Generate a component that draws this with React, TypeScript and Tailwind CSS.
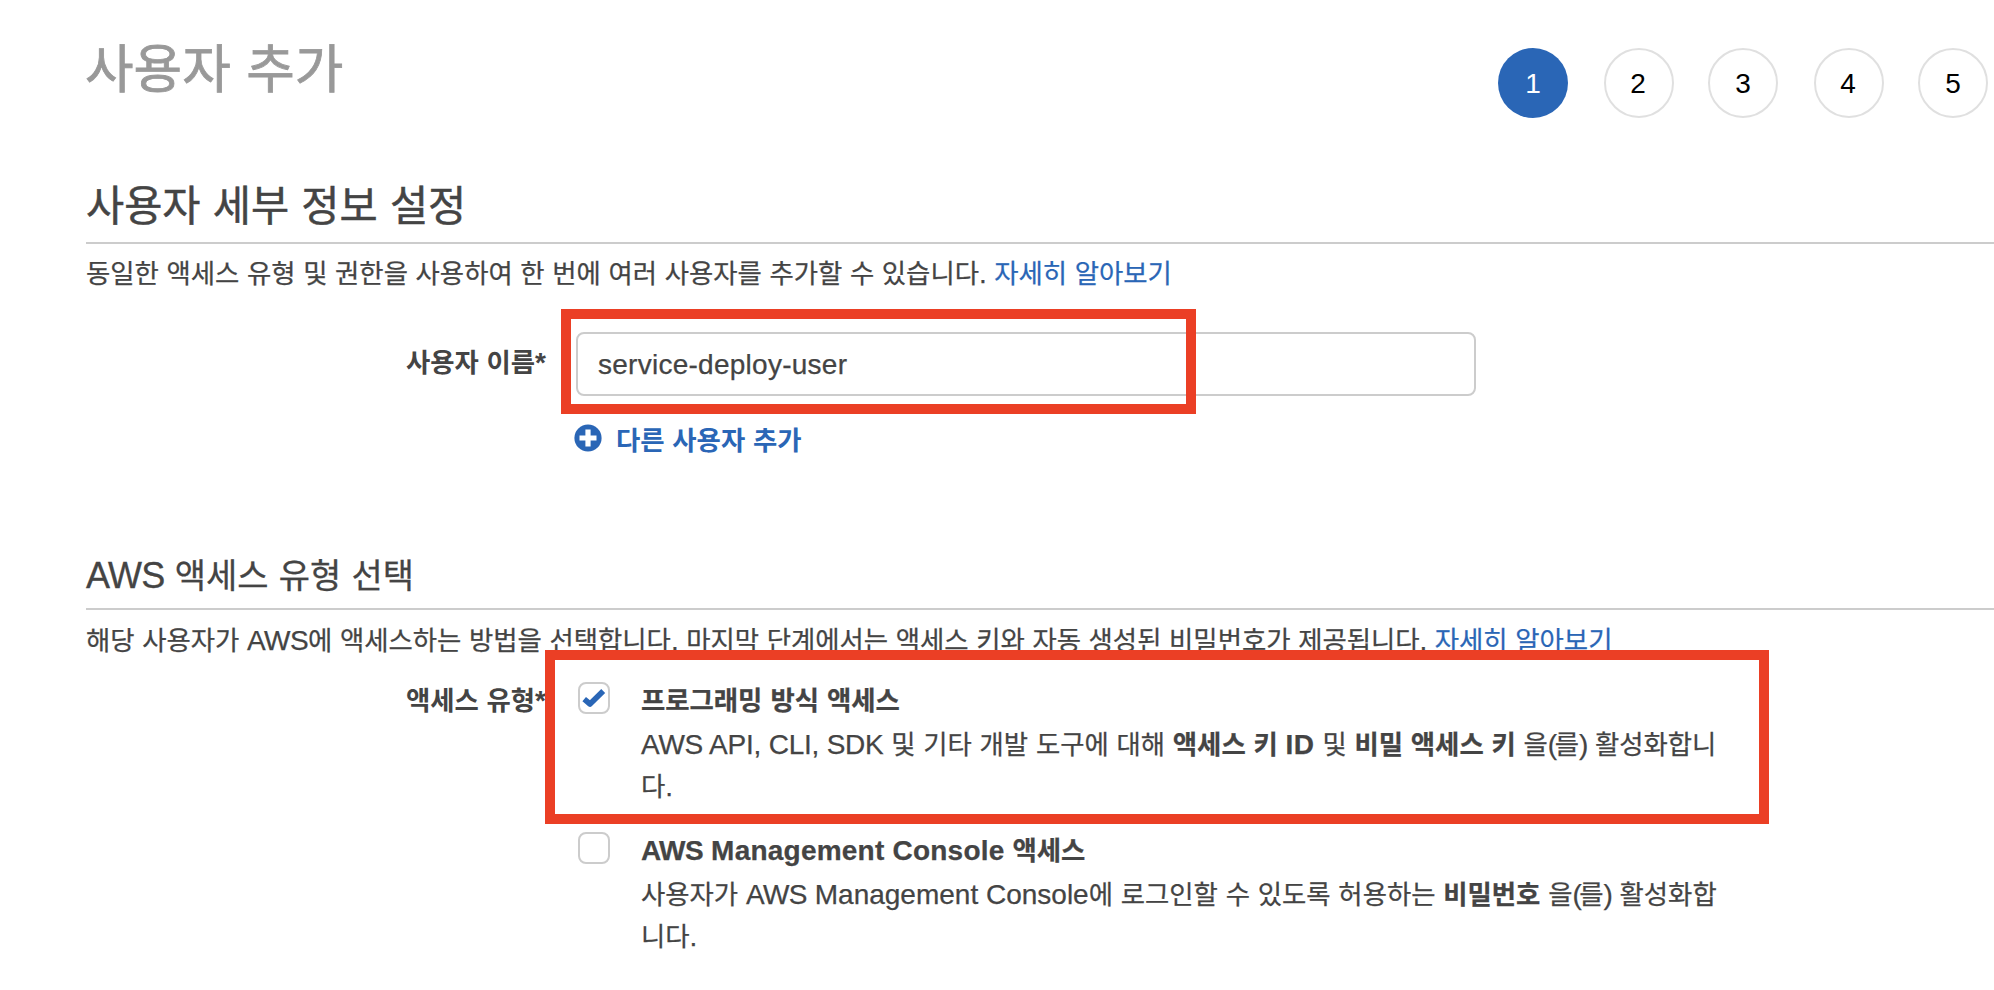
import { Fragment } from "react";
import type { ReactNode } from "react";

function Ko({ text }: { text: string }) {
  const runs = text.split(/([\uac00-\ud7a3]+|AWS|[()])/).filter(Boolean);
  return (
    <>
      {runs.map((run, i) => {
        if (/[\uac00-\ud7a3]/.test(run)) return <span key={i} className="text-[0.943em] tracking-normal">{run}</span>;
        if (run === "AWS") return <span key={i} className="tracking-[-0.02em]">{run}</span>;
        if (run === "(") return <span key={i} className="tracking-[-0.09em]">{run}</span>;
        if (run === ")") return <span key={i} className="tracking-[-0.04em]">{run}</span>;
        return <Fragment key={i}>{run}</Fragment>;
      })}
    </>
  );
}

function Step({ n, active }: { n: number; active?: boolean }) {
  return (
    <li
      className={
        active
          ? "flex size-[70px] items-center justify-center rounded-full bg-[#2a66b6] pt-0.5 text-white"
          : "flex size-[70px] items-center justify-center rounded-full border-2 border-[#e0e0e0] pt-0.5 text-black even:-mr-px even:ml-px even:pr-0.5"
      }
    >
      {n}
    </li>
  );
}

function Checkbox({ checked }: { checked?: boolean }) {
  return (
    <span className="mt-[3px] flex size-8 shrink-0 items-center justify-center rounded-lg border-2 border-[#cccccc] bg-white">
      {checked && (
        <svg viewBox="0 0 24 20" className="h-5 w-6 fill-none stroke-[#2a66b6]" strokeWidth="5.6">
          <path d="M2.2 11.2 L8 16 L21.2 3" strokeLinejoin="round" />
        </svg>
      )}
    </span>
  );
}

function Option({ title, checked, children }: { title: string; checked?: boolean; children: ReactNode }) {
  return (
    <div className="flex gap-[31px]">
      <Checkbox checked={checked} />
      <div>
        <div className="h-[45px] font-bold leading-[44px] tracking-[0.008em]"><Ko text={title} /></div>
        <div className="leading-[42px]">{children}</div>
      </div>
    </div>
  );
}

function Link({ text }: { text: string }) {
  return <a href="#" className="text-[#2a66b6]"><Ko text={text} /></a>;
}

export default function App() {
  return (
    <div className="relative h-[990px] w-[1994px] overflow-hidden bg-white pl-[86px] font-['Liberation_Sans','Noto_Sans_CJK_KR',sans-serif] text-[28px] text-[#444444]">
      <header className="flex h-[160px] justify-between pr-1.5">
        <h1 className="-ml-px pt-[27px] text-[56px] leading-[84px] text-[#999999] [-webkit-text-stroke:0.8px_#999999]"><Ko text="사용자 추가" /></h1>
        <ol className="flex gap-[35px] pt-12">
          <Step n={1} active />
          <Step n={2} />
          <Step n={3} />
          <Step n={4} />
          <Step n={5} />
        </ol>
      </header>

      <section className="h-[378px]">
        <h2 className="h-[84px] border-b-2 border-[#cccccc] pt-[13px] text-[44px] leading-[66px] [-webkit-text-stroke:0.5px_#444444]"><Ko text="사용자 세부 정보 설정" /></h2>
        <p className="h-[51px] pt-[9px] leading-[42px] tracking-[-0.14px] [-webkit-text-stroke:0.25px]">
          <Ko text="동일한 액세스 유형 및 권한을 사용하여 한 번에 여러 사용자를 추가할 수 있습니다. " />
          <Link text="자세히 알아보기" />
        </p>
        <div className="flex pt-[37px]">
          <div className="mr-[30px] w-[460px] pt-2.5 text-right font-bold leading-[42px]"><Ko text="사용자 이름*" /></div>
          <div>
            <input
              className="block h-16 w-[900px] rounded-lg border-2 border-[#cccccc] px-5 pt-0.5 text-[28px] tracking-[0.26px] outline-none [-webkit-text-stroke:0.25px]"
              defaultValue="service-deploy-user"
            />
            <a href="#" className="mt-[21px] -ml-0.5 flex h-[42px] items-center gap-3.5 font-bold leading-[42px] text-[#2a66b6]">
              <svg viewBox="0 0 28 28" className="size-7">
                <circle cx="14" cy="14" r="13.6" className="fill-[#2a66b6]" />
                <path d="M14 5.5v17M5.5 14h17" className="stroke-white" strokeWidth="5.2" />
              </svg>
              <span className="pt-[5px]"><Ko text="다른 사용자 추가" /></span>
            </a>
          </div>
        </div>
      </section>

      <section>
        <h3 className="h-[72px] border-b-2 border-[#cccccc] pt-[11px] text-[36px] leading-[54px] tracking-[0.3px] [-webkit-text-stroke:0.3px]"><Ko text="AWS 액세스 유형 선택" /></h3>
        <p className="h-[51px] pt-2.5 leading-[42px] tracking-[-0.14px] [-webkit-text-stroke:0.25px]">
          <Ko text="해당 사용자가 AWS에 액세스하는 방법을 선택합니다. 마지막 단계에서는 액세스 키와 자동 생성된 비밀번호가 제공됩니다. " />
          <Link text="자세히 알아보기" />
        </p>
        <div className="flex pt-[18px]">
          <div className="mr-8 w-[460px] text-right font-bold leading-[44px]"><Ko text="액세스 유형*" /></div>
          <div className="flex flex-col gap-[21px] [-webkit-text-stroke:0.25px]">
            <Option title="프로그래밍 방식 액세스" checked>
              <span className="tracking-[-0.008em]">AWS API, CLI, SDK </span>
              <Ko text="및 기타 개발 도구에 대해 " />
              <b><Ko text="액세스 키 " /><span className="tracking-[0.02em]">ID</span></b>
              <Ko text=" 및 " />
              <b><Ko text="비밀 액세스 키" /></b>
              <Ko text=" 을(를) 활성화합니" />
              <br />
              <Ko text="다." />
            </Option>
            <Option title="AWS Management Console 액세스">
              <Ko text="사용자가 AWS Management Console에 로그인할 수 있도록 허용하는 " />
              <b><Ko text="비밀번호" /></b>
              <Ko text=" 을(를) 활성화합" />
              <br />
              <Ko text="니다." />
            </Option>
          </div>
        </div>
      </section>

      <div className="absolute left-[561px] top-[309px] h-[105px] w-[635px] border-10 border-[#eb3f25]" />
      <div className="absolute left-[545px] top-[650px] h-[174px] w-[1224px] border-10 border-[#eb3f25]" />
    </div>
  );
}
